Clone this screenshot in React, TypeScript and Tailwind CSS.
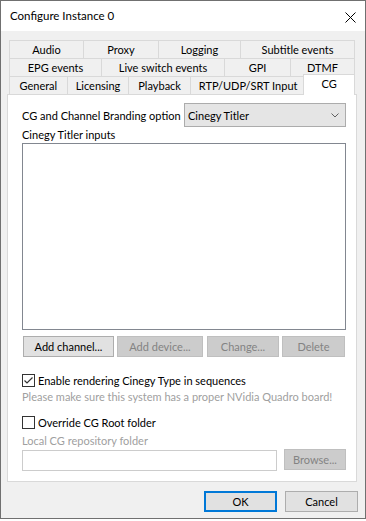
const font = { fontFamily: 'Lato, "Noto Sans", sans-serif' };

type Tab = { label: string; w: string };

const rows: Tab[][] = [
  [
    { label: "Audio", w: "w-[74px]" },
    { label: "Proxy", w: "w-[75px]" },
    { label: "Logging", w: "w-[82px]" },
    { label: "Subtitle events", w: "w-[115px]" },
  ],
  [
    { label: "EPG events", w: "w-[92px]" },
    { label: "Live switch events", w: "w-[123px]" },
    { label: "GPI", w: "w-[66px]" },
    { label: "DTMF", w: "w-[65px]" },
  ],
  [
    { label: "General", w: "w-[58px]" },
    { label: "Licensing", w: "w-[62px]" },
    { label: "Playback", w: "w-[62px]" },
    { label: "RTP/UDP/SRT Input", w: "w-[116px]" },
  ],
];

function Checkbox({ checked, label }: { checked?: boolean; label: string }) {
  return (
    <div className="flex h-[13px] items-center">
      <span className="flex h-[13px] w-[13px] items-center justify-center border border-[#333333] bg-white">
        {checked && (
          <svg width="11" height="11" viewBox="0 0 11 11">
            <path d="M1.5 5.5 L4 8 L9.5 2.5" fill="none" stroke="#333333" strokeWidth="1.2" />
          </svg>
        )}
      </span>
      <span className="ml-[3px] whitespace-nowrap text-[11px] leading-[13px] text-black">{label}</span>
    </div>
  );
}

function Button({ children, w, disabled }: { children: string; w: string; disabled?: boolean }) {
  return (
    <div
      className={`flex h-[21px] items-center justify-center whitespace-nowrap border text-[11px] leading-[13px] ${w} ${
        disabled
          ? "border-[#bfbfbf] bg-[#cccccc] text-[#838383]"
          : "border-[#adadad] bg-[#e1e1e1] text-black"
      }`}
    >
      {children}
    </div>
  );
}

export default function App() {
  return (
    <div className="h-[521px] w-[366px] bg-white" style={font}>
      <div className="flex h-[519px] w-[366px] flex-col border border-[#707070]">
        {/* Title bar */}
        <div className="flex h-[30px] items-center justify-between bg-white pl-[9px] pr-[9px]">
          <span className="whitespace-nowrap text-[11.5px] leading-[16px] text-black">Configure Instance 0</span>
          <svg width="11" height="11" viewBox="0 0 11 11" className="mt-[2px]">
            <path d="M0.5 0.5 L10.5 10.5 M10.5 0.5 L0.5 10.5" stroke="#000" strokeWidth="1" />
          </svg>
        </div>

        {/* Body */}
        <div className="flex flex-1 flex-col bg-[#f0f0f0] pl-[6px] pt-[9px]">
          {/* Tabs */}
          <div className="ml-[2px] w-[346px] text-[11px] text-black">
            {rows.map((row, i) => (
              <div key={i} className="flex h-[18px]">
                {row.map((t, j) => (
                  <div
                    key={t.label}
                    className={`flex h-[18px] items-center justify-center whitespace-nowrap border-l border-t border-[#d9d9d9] bg-[#f0f0f0] leading-[13px] ${t.w} ${
                      i < 2 && j === row.length - 1 ? "border-r" : ""
                    }`}
                  >
                    {t.label}
                  </div>
                ))}
                {i === 2 && (
                  <div className="relative z-10 -ml-[2px] -mt-[2px] flex h-[21px] w-[52px] items-start justify-center border border-b-0 border-[#d9d9d9] bg-white pt-[2px] leading-[13px]">
                    CG
                  </div>
                )}
              </div>
            ))}
          </div>

          {/* Panel */}
          <div className="flex h-[388px] w-[350px] flex-col border border-[#d9d9d9] bg-white pl-[14px] pt-[8px]">
            <div className="flex h-[24px] w-[324px] items-center">
              <span className="whitespace-nowrap text-[11px] leading-[13px] text-black">CG and Channel Branding option</span>
              <div className="ml-auto flex h-[24px] w-[162px] shrink-0 items-center justify-between border border-[#acacac] bg-[#e5e5e5] pl-[3px] pr-[6px]">
                <span className="whitespace-nowrap text-[11px] leading-[13px] text-black">Cinegy Titler</span>
                <svg width="8" height="5" viewBox="0 0 8 5">
                  <path d="M0.5 0.5 L4 4 L7.5 0.5" fill="none" stroke="#606060" strokeWidth="1" />
                </svg>
              </div>
            </div>
            <div className="h-[16px] whitespace-nowrap text-[11px] leading-[16px] text-black">Cinegy Titler inputs</div>
            <div className="h-[187px] w-[324px] border border-[#828790] bg-white" />

            <div className="ml-[1px] mt-[6px] flex gap-[3px]">
              <Button w="w-[91px]">Add channel...</Button>
              <Button w="w-[86px]" disabled>
                Add device...
              </Button>
              <div className="ml-[1px]">
                <Button w="w-[72px]" disabled>
                  Change...
                </Button>
              </div>
              <Button w="w-[63px]" disabled>
                Delete
              </Button>
            </div>

            <div className="mt-[17px]">
              <Checkbox checked label="Enable rendering Cinegy Type in sequences" />
            </div>
            <div className="mt-[2px] h-[16px] whitespace-nowrap text-[11px] leading-[16px] text-[#a0a0a0]">
              Please make sure this system has a proper NVidia Quadro board!
            </div>
            <div className="mt-[11px]">
              <Checkbox label="Override CG Root folder" />
            </div>
            <div className="mt-[4px] h-[16px] whitespace-nowrap text-[11px] leading-[16px] text-[#a0a0a0]">
              Local CG repository folder
            </div>
            <div className="flex w-[324px] items-start">
              <div className="mt-[1px] h-[21px] w-[255px] border border-[#cccccc] bg-white" />
              <div className="ml-auto">
                <Button w="w-[62px]" disabled>
                  Browse...
                </Button>
              </div>
            </div>
          </div>

          {/* Dialog buttons */}
          <div className="mt-[9px] flex justify-end gap-[8px] pr-[7px]">
            <div className="flex h-[21px] w-[73px] items-center justify-center border-2 border-[#0078d7] bg-[#e1e1e1] text-[11px] leading-[13px] text-black">
              OK
            </div>
            <div className="flex h-[21px] w-[73px] items-center justify-center border border-[#adadad] bg-[#e1e1e1] text-[11px] leading-[13px] text-black">
              Cancel
            </div>
          </div>
        </div>
      </div>
    </div>
  );
}
